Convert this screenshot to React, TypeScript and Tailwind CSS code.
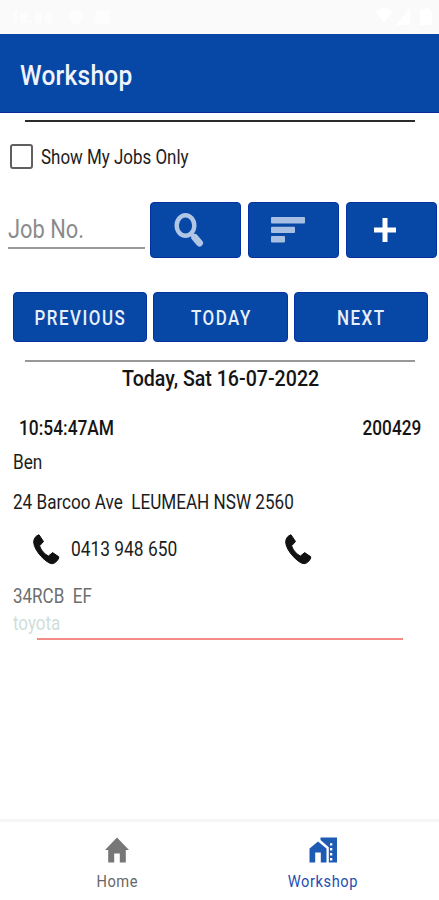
import { ReactNode } from 'react'

interface LabelProps {
  children: ReactNode
  className?: string
}

// Slightly condensed Roboto, anchored left unless told otherwise
function Label({ children, className = 'origin-left text-[20px] text-[#1c1c1c]' }: LabelProps) {
  return <span className={`inline-block scale-x-86 whitespace-pre ${className}`}>{children}</span>
}

function PhoneIcon() {
  return (
    <svg width="27" height="31" viewBox="0 0 27 31" fill="#111">
      <path
        d="M6 .8L10.500 7.500 6.600 11.800C8 16.500 12 20.500 15.500 22L19.600 18.600 25.800 22.800C25.800 26 22 29.700 19 29.700 14 29.700.8 17 .7 8 .7 4.500 3 1.500 6 .8Z"
        stroke="#111"
        strokeWidth="1"
        strokeLinejoin="round"
      />
    </svg>
  )
}

function SearchIcon() {
  return (
    <svg width="30" height="35" viewBox="0 0 30 35" fill="none" stroke="#b1c5e5">
      <ellipse cx="11.500" cy="12.500" rx="8.800" ry="10.300" strokeWidth="4.400" />
      <path d="M17 20.500l3 3.300" strokeWidth="3.500" />
      <path d="M20.800 24.500l4.700 5.500" strokeWidth="7" strokeLinecap="round" />
    </svg>
  )
}

function SortIcon() {
  return (
    <svg width="34" height="26" viewBox="0 0 34 26" fill="#a7bfe3">
      <rect width="34" height="6.500" rx="1" />
      <rect y="9.700" width="24" height="6.300" rx="1" />
      <rect y="19" width="14" height="6.500" rx="1" />
    </svg>
  )
}

function PlusIcon() {
  return (
    <svg width="22" height="26" viewBox="0 0 22 26" stroke="#fff">
      <path d="M11 1v24" strokeWidth="5" />
      <path d="M0 13h22" strokeWidth="5" />
    </svg>
  )
}

function HomeIcon() {
  return (
    <svg width="24" height="26" viewBox="0 0 24 26" fill="#777">
      <path d="M12 .5L0 13h3.200v12.500H9.200V16.500h5.600v9H20.800V13H24Z" />
    </svg>
  )
}

function WorkshopIcon() {
  return (
    <svg width="28" height="26" viewBox="0 0 28 26" fill="#1d5bb5">
      <path d="M9 4.500L.5 11.500v14h5.700v-10h5.600v10h5.700v-14Z" />
      <path
        fillRule="evenodd"
        d="M11.500.5H28v25h-8.200V10.200l-8.300-7.200ZM21 6.300h2.300v2.300H21ZM21 11h2.300v2.500H21ZM21 16h2.300v2.500H21ZM21 21h2.300v2.400H21Z"
      />
    </svg>
  )
}

function StatusBar() {
  return (
    <div className="flex h-[34px] shrink-0 items-center bg-[#fafafa] pl-[13px] pr-[7px]">
      <svg width="98" height="18" viewBox="0 0 98 18" fill="#fdfdfd">
        <path d="M1 3h3v12H1zM7 5h7v10H7zM17 12h2v3h-2zM22 4h7v11h-7zM32 4h7v11h-7z" />
        <circle cx="63" cy="9" r="7" />
        <path d="M84 2h14l-3 14H81z" />
      </svg>
      <svg className="ml-auto" width="56" height="20" viewBox="0 0 56 20" fill="#fff">
        <path d="M0 5c5-5 11-5 16 0l-8 12zM34 1v17H20zM46 3h3V1h4v2h3v15H44V3z" />
      </svg>
    </div>
  )
}

const iconButton = 'flex h-14 w-[91.5px] items-center rounded-[4px] border border-[#0532a0] bg-[#0747a6]'
const dayButton =
  'flex h-[50px] flex-1 items-center justify-center rounded-[4px] border border-[#0532a0] bg-[#0747a6] pl-px pt-[3px]'
const dayLabel = 'origin-center text-[19.7px] font-medium tracking-[0.0893em] text-[#e9effb]'

export default function App() {
  return (
    <div className="flex h-[900px] w-[439px] flex-col overflow-hidden bg-white font-['Roboto',sans-serif] leading-none">
      <StatusBar />

      <header className="flex h-[79px] shrink-0 items-center border-b border-[#0a2a9c] bg-[#0747a6] pl-5 pt-1.5">
        <Label className="origin-left text-[28.5px] font-medium tracking-[0.01em] text-[#f0f4fd]">Workshop</Label>
      </header>

      <main className="flex flex-col">
        <div className="ml-[25px] mr-6 mt-[7px] h-0.5 bg-[#2b2b2b]" />

        <label className="ml-[10px] mt-[22px] flex h-[25px] items-center">
          <span className="mr-2 h-[25px] w-[23px] rounded-[3px] border-2 border-[#5f5f5f]" />
          <Label className="origin-left pt-0.5 text-[19.7px] text-[#1c1c1c]">Show My Jobs Only</Label>
        </label>

        <div className="mt-[33px] flex h-14 gap-[6.5px] pl-2">
          <div className="mr-[-2px] flex h-[47px] w-[137px] items-center border-b-2 border-[#999] pt-[11px]">
            <Label className="origin-left text-[25.4px] text-[#8b8b8b]">Job No.</Label>
          </div>
          <button className={`${iconButton} pl-[23px]`}>
            <SearchIcon />
          </button>
          <button className={`${iconButton} pl-[22px]`}>
            <SortIcon />
          </button>
          <button className={`${iconButton} pl-[27px]`}>
            <PlusIcon />
          </button>
        </div>

        <div className="mt-[34px] flex gap-[6px] pl-[13px] pr-[11px]">
          <button className={dayButton}>
            <Label className={dayLabel}>PREVIOUS</Label>
          </button>
          <button className={dayButton}>
            <Label className={dayLabel}>TODAY</Label>
          </button>
          <button className={dayButton}>
            <Label className={dayLabel}>NEXT</Label>
          </button>
        </div>

        <div className="ml-[25px] mr-6 mt-[18px] h-0.5 bg-[#989898]" />
        <div className="flex h-8 items-center justify-center pl-0.5 pt-0.5">
          <Label className="origin-center text-[22.8px] font-medium text-[#151515]">Today, Sat 16-07-2022</Label>
        </div>

        <section className="mt-[17px] flex flex-col pl-[13px]">
          <div className="flex h-[34px] items-center justify-between pl-[6px] pr-[17.5px]">
            <Label className="origin-left text-[20.2px] font-medium text-[#151515]">10:54:47AM</Label>
            <Label className="origin-right text-[20px] font-medium text-[#151515]">200429</Label>
          </div>
          <div className="flex h-[33px] items-center">
            <Label>Ben</Label>
          </div>
          <div className="flex h-12 items-center pt-px">
            <Label className="origin-left text-[19.9px] text-[#1c1c1c]">{'24 Barcoo Ave  LEUMEAH NSW 2560'}</Label>
          </div>
          <div className="flex h-[46px] items-center pl-5">
            <PhoneIcon />
            <div className="ml-[11px] w-[214px]">
              <Label className="origin-left text-[20.2px] text-[#1c1c1c]">0413 948 650</Label>
            </div>
            <PhoneIcon />
          </div>
          <div className="mt-3 flex h-[25px] items-center pt-px">
            <Label className="origin-left text-[19.8px] text-[#6e6e6e]">{'34RCB  EF'}</Label>
          </div>
          <div className="flex h-7 items-center pt-px">
            <Label className="origin-left text-[19.7px] text-[#cfdedb]">toyota</Label>
          </div>
        </section>
        <div className="ml-[37px] mr-9 mt-px h-0.5 bg-[#f28b86]" />
      </main>

      <nav className="mt-auto flex h-[81px] shrink-0 border-t-[3px] border-[#f6f6f6]">
        <div className="flex w-[234px] flex-col items-center pt-[15px]">
          <HomeIcon />
          <Label className="mt-[10px] origin-center text-[17px] tracking-[0.04em] text-[#666]">Home</Label>
        </div>
        <div className="flex w-[177px] flex-col items-center pt-[15px]">
          <WorkshopIcon />
          <Label className="mt-[10px] origin-center text-[17px] tracking-[0.04em] text-[#1f4fb0]">Workshop</Label>
        </div>
      </nav>
    </div>
  )
}
